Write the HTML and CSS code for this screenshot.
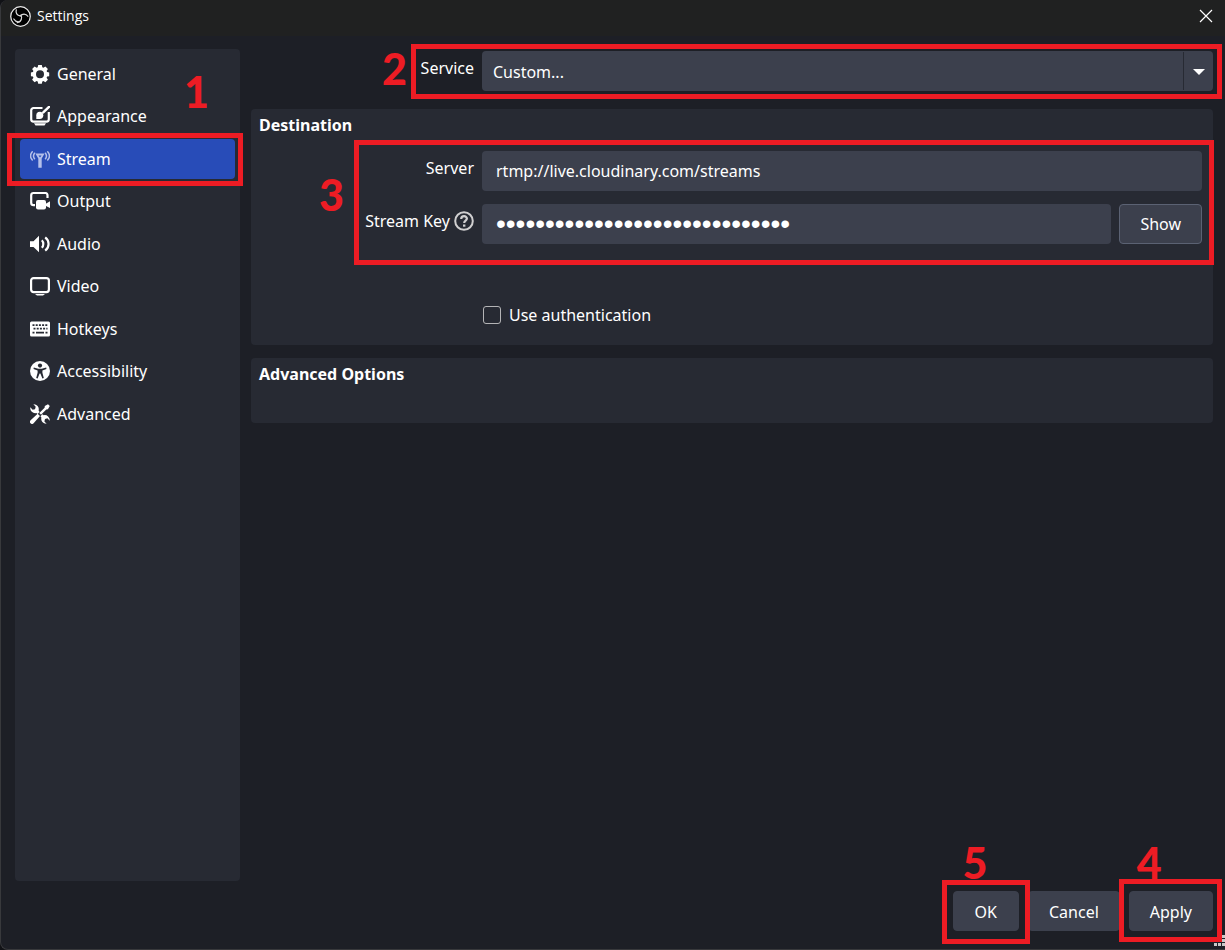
FILE: index.html
```
<!DOCTYPE html>
<html lang="en">
<head>
    <meta charset="UTF-8">
    <meta name="viewport" content="width=device-width, initial-scale=1.0">
    <title>Settings</title>
    <link rel="stylesheet" href="styles.css">
</head>
<body>
    <div class="window">
        <header class="titlebar">
            <svg class="logo" viewBox="0 0 20 20">
                <circle cx="10" cy="10" r="9.3" fill="#000" stroke="#e8e8e8" stroke-width="1.2"/>
                <g fill="none" stroke="#d8d8d8" stroke-width="1.2" stroke-linecap="round">
                    <path d="M6 3.6C5.2 6.6 6.600 9 9.800 9.400"/>
                    <path d="M9.800 9.400C11.500 7.200 15.200 6.800 17 9.800"/>
                    <path d="M10.400 8.800C12.200 11.400 10.600 15 7 15.800"/>
                    <path d="M3.600 12.400C5 14.800 7.200 15.400 9.400 14.800"/>
                </g>
            </svg>
            <h1>Settings</h1>
            <button class="close" aria-label="Close">
                <svg viewBox="0 0 14 14"><path d="M1 1l12 12M13 1L1 13" stroke="#fff" stroke-width="1.2"/></svg>
            </button>
        </header>

        <div class="main">
            <nav class="sidebar">
                <button class="nav-item">
                    <svg viewBox="0 0 20 20" fill="#fff"><path fill-rule="evenodd" d="M8.200 1h3.600l.5 2.300 1.100.5 2-1.300 2.500 2.500-1.300 2 .5 1.100 2.100.5v3.600l-2.100.4-.5 1.200 1.300 2-2.500 2.500-2-1.300-1.100.5-.5 2.200H8.200l-.5-2.200-1.100-.5-2 1.300-2.500-2.500 1.300-2-.5-1.200-2-.4V8.600l2-.5.5-1.100-1.300-2 2.500-2.500 2 1.300 1.100-.5zM10 6.200a4 4 0 1 0 0 8 4 4 0 0 0 0-8z"/></svg>
                    General
                </button>
                <button class="nav-item">
                    <svg viewBox="0 0 20 20">
                        <path d="M12.500 2H3.500A2.300 2.300 0 0 0 1.200 4.300v9a2.300 2.300 0 0 0 2.300 2.300h13a2.300 2.300 0 0 0 2.300-2.300V6" fill="none" stroke="#fff" stroke-width="2.200"/>
                        <path d="M4 17.300h12l-1.500 2.200h-9z" fill="#fff"/>
                        <path d="M6.300 13V9.200A3.500 3.500 0 0 1 9.800 5.700 3.700 3.700 0 0 1 13.300 9.300 3.700 3.700 0 0 1 9.600 13z" fill="#fff"/>
                        <path d="M13.300 6.400L19 .8" stroke="#fff" stroke-width="2.400" stroke-linecap="round"/>
                    </svg>
                    Appearance
                </button>
                <button class="nav-item selected">
                    <svg viewBox="0 0 20 20" fill="none" stroke="#b4c0ea" stroke-width="1.500" stroke-linecap="round">
                        <path d="M2.300 2.800C.2 5.200.2 8.600 2.300 11M4.500 4.200c-1.200 1.700-1.200 3.900 0 5.500M17.700 2.800c2.100 2.400 2.100 5.800 0 8.200M15.500 4.200c1.200 1.700 1.200 3.900 0 5.500"/>
                        <path d="M5.400 4.500h9.200L11.700 9.500v9.200H8.300V9.500z" fill="#b4c0ea" stroke="none"/>
                        <path d="M8.500 6.500h3L10 8.400z" fill="#284cb8" stroke="none"/>
                    </svg>
                    Stream
                    <span class="mark mark-stream"></span>
                </button>
                <button class="nav-item">
                    <svg viewBox="0 0 20 20">
                        <path d="M5 14.200H3.500A2.300 2.300 0 0 1 1.200 12V4.200A2.300 2.300 0 0 1 3.500 2h12A2.300 2.300 0 0 1 17.500 4.200V7" fill="none" stroke="#fff" stroke-width="2.200"/>
                        <rect x="6" y="9" width="10" height="9.500" rx="2" fill="#fff"/>
                        <path d="M15 13.200L20 10.300V17L15 14.500z" fill="#fff"/>
                    </svg>
                    Output
                </button>
                <button class="nav-item">
                    <svg viewBox="0 0 20 20">
                        <path d="M0 7.300h3.500L9 1.800v16.400L3.500 12.900H0z" fill="#fff"/>
                        <path d="M11.800 6.200c2 2 2 5.600 0 7.600M15.200 3.300c4.500 3.500 4.500 9.900 0 13.400" fill="none" stroke="#fff" stroke-width="2.200"/>
                    </svg>
                    Audio
                </button>
                <button class="nav-item">
                    <svg viewBox="0 0 20 20">
                        <rect x="1.100" y="2.100" width="17.800" height="14" rx="2.500" fill="none" stroke="#fff" stroke-width="2.200"/>
                        <path d="M5 18h10l-2 1.500H7z" fill="#fff"/>
                    </svg>
                    Video
                </button>
                <button class="nav-item">
                    <svg viewBox="0 0 20 20">
                        <rect y="2.500" width="20" height="15" rx="1.500" fill="#fff"/>
                        <path d="M2.500 6.200h15M3.500 9.700h14" stroke="#272a33" stroke-width="1.800" stroke-dasharray="2 1.200"/>
                        <path d="M2.500 13.700h2M6 13.700h8M15.500 13.700h2" stroke="#272a33" stroke-width="1.800"/>
                    </svg>
                    Hotkeys
                </button>
                <button class="nav-item">
                    <svg viewBox="0 0 20 20">
                        <circle cx="10" cy="10" r="10" fill="#fff"/>
                        <circle cx="10" cy="4.600" r="2.100" fill="#272a33"/>
                        <path d="M3.800 6.600l4.500 1.100h3.400l4.500-1.100.3 1.300-4.100 1.500v2.400l1.400 5.100-1.400.5-2-4.900h-.8l-2 4.900-1.400-.5 1.400-5.100V9.400L3.500 7.900z" fill="#272a33"/>
                    </svg>
                    Accessibility
                </button>
                <button class="nav-item">
                    <svg viewBox="0 0 20 20" fill="#fff">
                        <path d="M19.800 2L18 .2l-3.200 1.900-.2 1.600-5.300 5.300 1.700 1.700 5.300-5.300 1.600-.2z"/>
                        <path d="M7.600 9.700L.6 16.200a2.100 2.100 0 0 0 3 3.100l6.400-7.200z"/>
                        <path d="M.3 3.300A5 5 0 0 0 6.300 9l1.300 1 2-2-1-1.500A5 5 0 0 0 3.400.2L5.700 2.700 5 5.200l-2.300.6z"/>
                        <path d="M19.700 16.700a5 5 0 0 0-6-5.500l-1.300-1-2 2 1 1.300a5 5 0 0 0 5.200 6.300l-2.200-2.400.6-2.500 2.400-.7z"/>
                    </svg>
                    Advanced
                </button>
                <span class="step step-1">1</span>
            </nav>

            <div class="content">
                <div class="row service-row">
                    <label class="row-label" for="service">Service</label>
                    <div class="select">
                        <select id="service">
                            <option>Custom...</option>
                        </select>
                    </div>
                    <span class="mark mark-service"></span>
                    <span class="step step-2">2</span>
                </div>

                <section class="group">
                    <h2>Destination</h2>
                    <div class="fields">
                        <div class="row">
                            <label class="row-label" for="server">Server</label>
                            <input class="field" id="server" type="text" value="rtmp://live.cloudinary.com/streams">
                        </div>
                        <div class="row">
                            <label class="row-label" for="key">Stream Key
                                <svg class="help" viewBox="0 0 20 20" fill="none" stroke="#d0cfd0">
                                    <circle cx="10" cy="10" r="8.800" stroke-width="2"/>
                                    <path d="M7.200 8c0-3.800 5.700-3.600 5.700-.4 0 2-2.700 2-2.700 4.300" stroke-width="2.200"/>
                                    <path d="M10.200 13.500v2.200" stroke-width="2.400"/>
                                </svg>
                            </label>
                            <div class="key">
                                <input class="field password" id="key" type="password" value="abcd-efgh-ijkl-mnop-qrst-uvwxy">
                                <button class="btn show">Show</button>
                            </div>
                        </div>
                        <span class="mark mark-fields"></span>
                        <span class="step step-3">3</span>
                    </div>
                    <label class="check">
                        <input type="checkbox">
                        Use authentication
                    </label>
                </section>

                <section class="group advanced">
                    <h2>Advanced Options</h2>
                </section>
            </div>
        </div>

        <footer class="buttons">
            <button class="btn ok">OK<span class="mark mark-ok"></span><span class="step step-5">5</span></button>
            <button class="btn">Cancel</button>
            <button class="btn">Apply<span class="mark mark-apply"></span><span class="step step-4">4</span></button>
        </footer>
        <svg class="grip" viewBox="0 0 12 12" fill="#c8c8c8">
            <path d="M9 0h3v3H9zM9 4h3v3H9zM5 4h3v3H5zM9 8h3v3H9zM5 8h3v3H5zM1 8h3v3H1z"/>
        </svg>
    </div>
</body>
</html>
```
FILE: styles.css
```
* {
    box-sizing: border-box;
}
body {
    margin: 0;
    background: #111216;
    color: #fff;
    font: 16px/24px "Noto Sans", "Open Sans", sans-serif;
}
button, input, select {
    font: inherit;
    color: inherit;
}
svg {
    display: block;
}
.window {
    position: relative;
    display: flex;
    flex-direction: column;
    height: 100vh;
    border: 1px solid #38393c;
    border-width: 0 0 1px 1px;
    border-radius: 8px 0 0 8px;
    background: #1d1f26;
    overflow: hidden;
}
.titlebar {
    display: flex;
    align-items: center;
    gap: 6px;
    height: 36px;
    padding: 0 12px 4px 9px;
    background: #202121;
}
.titlebar h1 {
    flex: 1;
    margin: 0;
    font: 14px/20px "Open Sans", sans-serif;
}
.logo {
    width: 21px;
    height: 21px;
}
.close {
    padding: 0;
    border: 0;
    background: none;
}
.close svg {
    width: 14px;
    height: 14px;
}
.main {
    flex: 1;
    display: flex;
    gap: 11px;
    padding: 13px 12px 0 14px;
}
.sidebar {
    position: relative;
    display: grid;
    grid-auto-rows: 42px 43px;
    align-content: start;
    width: 225px;
    padding: 4px 5px;
    border-radius: 4px;
    background: #272a33;
}
.nav-item {
    position: relative;
    display: flex;
    align-items: flex-start;
    gap: 7px;
    margin: 1px 0;
    padding: 7px 9px;
    border: 1px solid transparent;
    border-radius: 4px;
    background: none;
    text-align: left;
}
.nav-item svg {
    width: 20px;
    height: 20px;
    margin-top: 2px;
}
.nav-item.selected {
    background: #284cb8;
}
.content {
    flex: 1;
    padding-top: 2px;
}
.row {
    display: grid;
    grid-template-columns: 223px 1fr;
    column-gap: 8px;
    align-items: start;
}
.row-label {
    display: flex;
    justify-content: flex-end;
    gap: 4px;
    padding-top: 5px;
}
.service-row {
    position: relative;
    margin-bottom: 18px;
}
.field, .select select {
    width: 100%;
    height: 40px;
    padding: 0 14px;
    border: 0;
    border-radius: 4px;
    background: #3c404d;
}
.select {
    position: relative;
}
.select select {
    padding: 1px 11px 0;
    appearance: none;
}
.select::before {
    content: "";
    position: absolute;
    top: 1px;
    right: 29px;
    bottom: 1px;
    width: 1px;
    background: #272a33;
}
.select::after {
    content: "";
    position: absolute;
    top: 18px;
    right: 8px;
    border: 6px solid transparent;
    border-top-color: #fff;
    border-bottom: 0;
}
.group {
    margin-bottom: 13px;
    border-radius: 4px;
    background: #272a33;
    padding: 4px 11px 18px 0;
}
.group h2 {
    margin: 0 8px;
    font-size: 16px;
    line-height: 24px;
}
.fields {
    position: relative;
    display: grid;
    gap: 13px;
    padding-top: 14px;
}
.help {
    width: 20px;
    height: 20px;
    margin-top: 2px;
}
.key {
    display: flex;
    gap: 8px;
}
.key .field {
    flex: 1;
}
.password {
    font: 28px "Liberation Sans", sans-serif;
}
.btn {
    position: relative;
    height: 40px;
    padding: 1px 20px 0;
    border: 1px solid #3c404d;
    border-radius: 4px;
    background: #3c404d;
}
.show {
    padding: 0 20px;
    border-color: #5b6273;
}
.ok {
    padding: 1px 21px 0;
}
.check {
    display: flex;
    align-items: center;
    gap: 8px;
    width: max-content;
    margin: 59px 0 0 232px;
}
.check input {
    appearance: none;
    width: 18px;
    height: 18px;
    margin: 0;
    border: 1px solid #b4b4b6;
    border-radius: 3px;
}
.advanced {
    padding-bottom: 37px;
}
.buttons {
    display: flex;
    justify-content: flex-end;
    gap: 9px;
    padding: 10px 12px 18px;
}
.grip {
    position: absolute;
    right: 0;
    bottom: 2px;
    width: 12px;
    height: 12px;
}

/* Step highlights */
.mark {
    position: absolute;
    border: 5px solid #ed1c24;
    pointer-events: none;
    z-index: 1;
}
.mark-stream {
    inset: -7px -9px -8px -14px;
}
.mark-service {
    inset: -7px -9px -8px 160px;
}
.mark-fields {
    inset: 3px -12px -21px 103px;
}
.mark-ok {
    inset: -12px -12px -14px -12px;
}
.mark-apply {
    inset: -13px -10px -12px -11px;
}
.step {
    position: absolute;
    color: #ed1c24;
    font: 900 43px/44px Lato, sans-serif;
}
.step-1 {
    top: 21px;
    left: 169px;
}
.step-2 {
    top: -4px;
    left: 131px;
}
.step-3 {
    top: 36px;
    left: 68px;
}
.step-4 {
    top: -51px;
    left: 7px;
}
.step-5 {
    top: -51px;
    left: 9px;
}
```
